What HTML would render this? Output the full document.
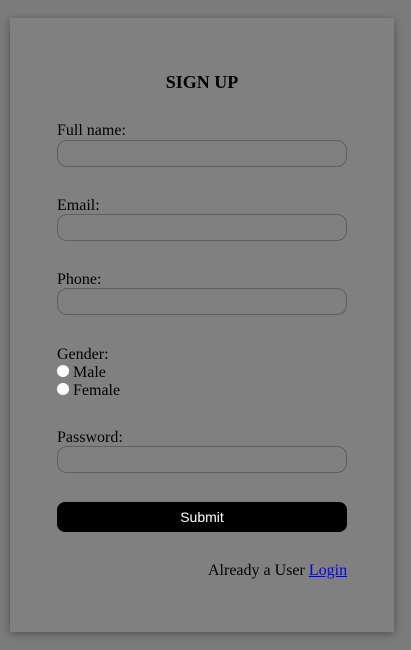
<!DOCTYPE html>
<html><head><style>
body{margin:0;width:411px;height:650px;background:#7b7b7b;position:relative;overflow:hidden;font-family:"Liberation Serif",serif;font-size:16px;color:#000}
.card{position:absolute;left:10px;top:18px;width:384px;height:614px;background:#808080;box-shadow:0 2px 8px rgba(0,0,0,.35)}
.t{position:absolute;line-height:18px;white-space:nowrap}
.in{position:absolute;left:57px;width:288px;height:25px;border:1px solid #5f5f5f;border-radius:10px}
.r{position:absolute;left:57px;width:12px;height:12px;border-radius:50%;background:#fff}
.btn{position:absolute;left:57px;top:502px;width:290px;height:30px;background:#000;border-radius:8px;color:#fff;font-family:"Liberation Sans",sans-serif;font-size:14px;text-align:center;line-height:30px}
a{color:#00e;text-decoration:underline}
</style></head><body>
<div class="card"></div>
<div class="t" style="left:0;width:404px;text-align:center;top:72px;font-weight:bold;font-size:18px;line-height:20px">SIGN UP</div>
<div class="t" style="left:57px;top:122px">Full name:</div>
<div class="in" style="top:140px"></div>
<div class="t" style="left:57px;top:197px">Email:</div>
<div class="in" style="top:214px"></div>
<div class="t" style="left:57px;top:271px">Phone:</div>
<div class="in" style="top:288px"></div>
<div class="t" style="left:57px;top:346px">Gender:</div>
<div class="r" style="top:365px"></div>
<div class="t" style="left:73px;top:364px">Male</div>
<div class="r" style="top:383px"></div>
<div class="t" style="left:73px;top:382px">Female</div>
<div class="t" style="left:57px;top:429px">Password:</div>
<div class="in" style="top:446px"></div>
<div class="btn">Submit</div>
<div class="t" style="left:208px;top:562px">Already a User <a>Login</a></div>
</body></html>
